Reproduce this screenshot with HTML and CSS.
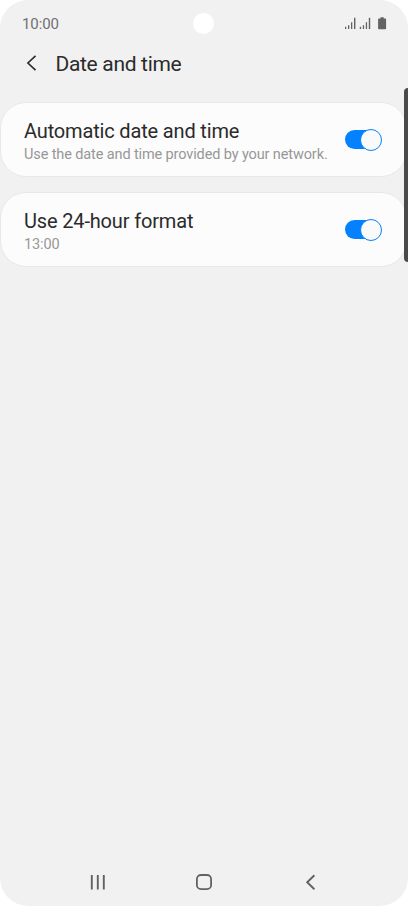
FILE: index.html
```
<!DOCTYPE html>
<html lang="en">
	<head>
		<meta charset="UTF-8">
		<title>Date and time</title>
		<link rel="stylesheet" href="styles.css">
	</head>
	<body>
		<div class="phone">
			<div class="status">
				<span class="clock">10:00</span>
				<span class="camera"></span>
				<div class="status_icons">
					<svg width="43" height="14" viewBox="0 0 43 14">
						<g fill="#636363">
							<path d="M1 9.700h1.300v2.300H1zM4 8.200h1.300V12H4zM7 5.200h1.300V12H7zM10 .8h1.400V12H10z"/>
							<path d="M15.800 9.700h1.300v2.300h-1.300zM18.800 8.200h1.300V12h-1.300zM21.800 5.200h1.300V12h-1.300zM24.800 .8h1.400V12h-1.400z"/>
							<path d="M36.500 .2h3.200v1.200h1.600q.8 0 .8.8v9.300q0 .8-.8.800h-6.400q-.8 0-.8-.8V2.200q0-.8.8-.8h1.600z"/>
						</g>
					</svg>
				</div>
			</div>

			<div class="header">
				<svg class="back" width="12" height="18" viewBox="0 0 12 18">
					<path d="M9.500 1.800L1.900 9l7.600 7.200" fill="none" stroke="#2b2b2b" stroke-width="1.600"/>
				</svg>
				<h1>Date and time</h1>
			</div>

			<ul class="list">
				<li class="card">
					<div class="text">
						<h2>Automatic date and time</h2>
						<p>Use the date and time provided by your network.</p>
					</div>
					<span class="switch"><i></i></span>
				</li>
				<li class="card">
					<div class="text">
						<h2>Use 24-hour format</h2>
						<p>13:00</p>
					</div>
					<span class="switch"><i></i></span>
				</li>
			</ul>

			<div class="nav">
				<svg width="18" height="18" viewBox="0 0 18 18">
					<path d="M2.800 2v14.400M8.800 2v14.400M14.800 2v14.400" fill="none" stroke="#626262" stroke-width="1.900"/>
				</svg>
				<svg width="18" height="18" viewBox="0 0 18 18">
					<rect x="1.900" y="2" width="14.200" height="14.200" rx="4.200" fill="none" stroke="#626262" stroke-width="1.800"/>
				</svg>
				<svg width="18" height="18" viewBox="0 0 18 18">
					<path d="M13.400 2.200L6.200 9.200l7.200 7" fill="none" stroke="#626262" stroke-width="1.900"/>
				</svg>
			</div>

			<!-- edge panel handle -->
			<div class="edge"></div>
		</div>
	</body>
</html>
```
FILE: styles.css
```
*{padding:0;margin:0;box-sizing:border-box;}
body{background:#fff;font-family:Roboto, "Liberation Sans", sans-serif;}
.phone{position:relative;width:408px;height:906px;display:flex;flex-direction:column;
	background:#f1f1f1;
	border-radius:28px;
	overflow:hidden;
}

.status{display:grid;grid-template-columns:1fr 22px 1fr;align-items:center;height:47px;padding:0 21px 0 22px;}
.clock{font-size:15px;line-height:20px;letter-spacing:-.1px;color:#707070;}
.camera{width:21px;height:21px;margin-left:-1px;border-radius:50%;background:#fff;}
.status_icons{display:flex;justify-content:flex-end;}

.header{display:flex;align-items:center;height:33px;padding-left:26px;}
.header h1{margin-left:17.5px;font-size:21px;line-height:26px;font-weight:400;letter-spacing:-.32px;color:#2b2b2b;}
.back{display:block;margin-top:-2px;}

.list{margin-top:22px;list-style:none;}
.card{display:flex;justify-content:space-between;align-items:center;height:75px;margin:0 1px 15px 0;
	padding:0 24px 0 23px;
	background:#fcfcfc;
	border:1px solid #e8e8e8;
	border-radius:26px;
}
.text{padding-top:4px;}
.card h2{font-size:20px;line-height:25px;font-weight:400;letter-spacing:-.16px;color:#2b2b2b;white-space:nowrap;}
.card p{font-size:14.5px;line-height:21px;letter-spacing:-.12px;color:#979797;white-space:nowrap;}

.switch{display:grid;align-items:center;width:37px;height:22px;}
.switch::before{content:"";grid-area:1/1;width:30px;height:19px;border-radius:10px;background:#0381fe;}
.switch i{grid-area:1/1;justify-self:end;width:22px;height:22px;border:1px solid #0381fe;border-radius:50%;background:#fafafa;}

.nav{display:flex;justify-content:space-between;margin-top:auto;padding:0 89px 15px;}
.nav svg{display:block;}

.edge{position:absolute;top:88px;right:0;width:4px;height:174px;background:#4a4a4a;border-radius:4px 0 0 4px;}
```
